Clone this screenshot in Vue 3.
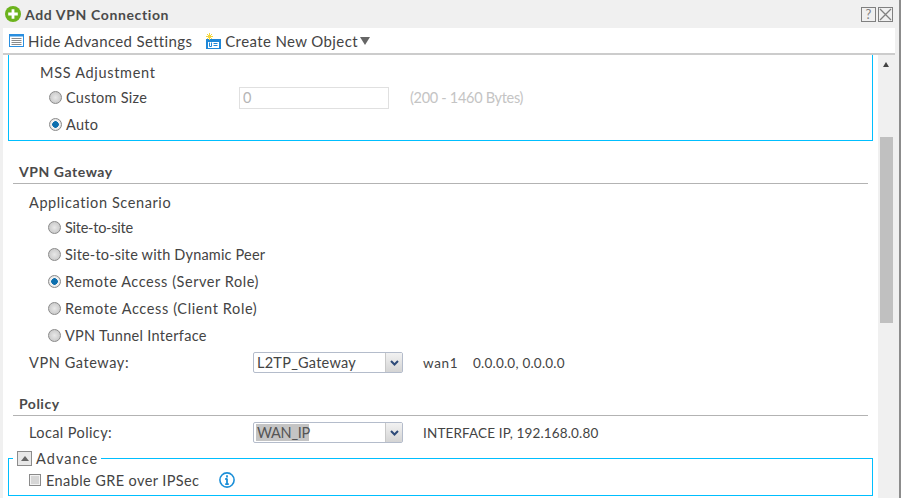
<script setup>
const scenarios = [
  { label: 'Site-to-site', on: false, track: -0.25 },
  { label: 'Site-to-site with Dynamic Peer', on: false, track: 0.18 },
  { label: 'Remote Access (Server Role)', on: true, track: 0.55 },
  { label: 'Remote Access (Client Role)', on: false, track: 0.62 },
  { label: 'VPN Tunnel Interface', on: false, track: 0.3 },
]
</script>

<template>
  <div class="window">
    <div class="dialog">
      <header class="title">
        <svg class="plus" width="16" height="16" viewBox="0 0 16 16">
          <circle cx="8" cy="8" r="8" fill="#6cb31c" />
          <path d="M8 3.2v9.6M3.2 8h9.6" stroke="#fff" stroke-width="2.8" />
        </svg>
        <span class="title-text">Add VPN Connection</span>
        <span class="win-btn">?</span>
        <span class="win-btn close">
          <svg width="13" height="13" viewBox="0 0 13 13"><path d="M1 1l11 11M12 1L1 12" stroke="#808080" stroke-width="1.3" fill="none" /></svg>
        </span>
      </header>
      <nav class="toolbar">
        <span class="tool first">
          <svg width="15" height="13" viewBox="0 0 15 13">
            <rect x=".5" y=".5" width="14" height="12" fill="#fff" stroke="#2a8fe0" />
            <rect x="0" y="0" width="15" height="2.5" fill="#2a8fe0" />
            <path d="M2.5 4.5h10M2.5 6.5h10M2.5 8.5h10M2.5 10.5h10" stroke="#8a8a8a" />
          </svg>
          Hide Advanced Settings
        </span>
        <span class="tool second">
          <svg width="15" height="16" viewBox="0 0 15 16">
            <rect x="0" y="6" width="15" height="10" fill="#1f88d8" />
            <rect x="2" y="9" width="11" height="6" fill="#fff" />
            <path d="M3.5 9.5v4h2v-4M7.5 10.5h4M7.5 12.5h4" stroke="#1f88d8" fill="none" />
            <path d="M3.5 0v7M0 3.5h7M1 1l5 5M6 1L1 6" stroke="#f5d63d" />
          </svg>
          Create New Object<span class="caret"></span>
        </span>
      </nav>
      <div class="body">
        <main class="content">
          <section class="box top-box">
            <div class="sub mss">MSS Adjustment</div>
            <div class="row custom">
              <span class="radio"></span>
              <span class="radio-label size-label">Custom Size</span>
              <input class="text-input" value="0" disabled />
              <span class="hint">(200 - 1460 Bytes)</span>
            </div>
            <div class="row auto">
              <span class="radio on"></span>
              <span class="radio-label">Auto</span>
            </div>
          </section>

          <h2 class="heading gateway-heading">VPN Gateway</h2>
          <div class="sub scenario">Application Scenario</div>
          <div v-for="s in scenarios" :key="s.label" class="row option">
            <span class="radio" :class="{ on: s.on }"></span>
            <span class="radio-label" :style="{ letterSpacing: s.track + 'px' }">{{ s.label }}</span>
          </div>
          <div class="field">
            <span class="field-label gateway-label">VPN Gateway:</span>
            <span class="select"><span class="select-value">L2TP_Gateway</span><span class="select-btn"><svg width="9" height="6" viewBox="0 0 9 6"><path d="M1 1l3.5 3.5L8 1" stroke="#2d4a78" stroke-width="2" fill="none" /></svg></span></span>
            <span class="field-note wide"><span class="iface">wan1</span>0.0.0.0, 0.0.0.0</span>
          </div>

          <h2 class="heading policy-heading">Policy</h2>
          <div class="field policy-field">
            <span class="field-label">Local Policy:</span>
            <span class="select"><span class="select-value chosen">WAN_IP</span><span class="select-btn"><svg width="9" height="6" viewBox="0 0 9 6"><path d="M1 1l3.5 3.5L8 1" stroke="#2d4a78" stroke-width="2" fill="none" /></svg></span></span>
            <span class="field-note">INTERFACE IP, 192.168.0.80</span>
          </div>

          <section class="box advance">
            <div class="legend">
              <span class="collapse"><i></i></span>
              <span class="legend-text">Advance</span>
            </div>
            <div class="row gre">
              <span class="check"></span>
              <span class="radio-label gre-label">Enable GRE over IPSec</span>
              <svg class="info" width="16" height="16" viewBox="0 0 16 16">
                <circle cx="8" cy="8" r="7.1" fill="#fff" stroke="#1b8fd8" stroke-width="1.6" />
                <path d="M8 3.2v2.2M8 6.6v5.6M6.2 7h1.8M6.2 12.2h3.6" stroke="#1b8fd8" stroke-width="1.8" fill="none" />
              </svg>
            </div>
          </section>
        </main>
        <aside class="scrollbar">
          <span class="arrow"></span>
          <span class="thumb"></span>
        </aside>
      </div>
    </div>
    <div class="edge"></div>
  </div>
</template>

<style>
html, body { margin: 0; background: #fff; }
</style>

<style scoped>
.window {
  width: 901px; height: 498px; display: flex; overflow: hidden;
  font-family: Lato, "Open Sans", sans-serif; font-size: 14.5px; color: #444;
  background: #f0f0f0;
}
.dialog { width: 899px; display: flex; flex-direction: column; }
.edge { width: 2px; background: #8c8c8c; }
.title { height: 28px; flex: none; display: flex; align-items: center; padding: 0 6px 0 5px; box-sizing: border-box; }
.plus { margin-right: 4px; }
.title-text { font-weight: 700; font-size: 14px; color: #4a4a4a; letter-spacing: .63px; flex: 1; }
.win-btn {
  width: 13px; height: 13px; border: 1px solid #808080; margin-left: 2px; font-size: 13px; line-height: 13px;
  text-align: center; color: #808080; display: flex; align-items: center; justify-content: center;
}
.toolbar {
  height: 27px; flex: none; box-sizing: border-box; margin: 0 4px 0 3px; padding-left: 6px; background: #fff;
  border-bottom: 2px solid #ccc; display: flex; align-items: center; font-size: 15px;
}
.tool { display: flex; align-items: center; gap: 4px; }
.first { letter-spacing: .35px; }
.second { margin-left: 14px; letter-spacing: .38px; }
.caret { width: 0; height: 0; border: 5px solid transparent; border-top: 8px solid #666; border-bottom: 0; margin-left: -2px; }
.body { flex: 1; display: flex; min-height: 0; margin-left: 3px; }
.content { width: 875px; background: #fff; position: relative; overflow: hidden; }
.scrollbar { flex: 1; display: flex; flex-direction: column; align-items: flex-start; padding-left: 2px; background: #f0f0f0; }
.arrow { width: 0; height: 0; margin: 7px 0 0 3px; border: 3.5px solid transparent; border-bottom: 5px solid #444; border-top: 0; }
.thumb { width: 13px; height: 186px; background: #c0c0c0; margin-top: 70px; }
.box { border: 1px solid #00bfff; box-sizing: border-box; }
.top-box { margin: 0 0 0 5px; width: 865px; height: 86px; border-top: 0; padding-top: 7px; }
.sub { font-size: 14.5px; }
.mss { margin-left: 31px; line-height: 22px; letter-spacing: .68px; }
.row { display: flex; align-items: center; }
.custom { margin-left: 40px; height: 27px; }
.auto { margin-left: 40px; height: 27px; }
.radio {
  width: 11px; height: 11px; border-radius: 50%; border: 1px solid #8a8a8a; flex: none;
  background: radial-gradient(circle, #e8e8e8, #c0c0c0);
}
.radio.on { background: radial-gradient(circle, #0d6fae 0 3px, #f4f4f4 3.6px, #d0d0d0); }
.radio-label { margin-left: 4px; letter-spacing: .25px; }
.size-label { width: 173px; }
.text-input {
  width: 150px; height: 22px; box-sizing: border-box; border: 1px solid #e0e0e0; padding: 0 3px; color: #b5b5b5; background: #fff;
  font: inherit;
}
.hint { margin-left: 21px; color: #c4c4c4; letter-spacing: -.3px; }
.heading {
  margin: 0; margin-left: 10px; width: 855px; padding-left: 6px; box-sizing: border-box; font-size: 14px; font-weight: 700; color: #4a4a4a;
  border-bottom: 1px solid #b3b3b3;
}
.gateway-heading { margin-top: 20px; height: 23px; line-height: 22px; letter-spacing: .55px; }
.scenario { margin: 7px 0 0 26px; line-height: 23px; letter-spacing: .6px; }
.option { margin-left: 45px; height: 27px; }
.field { display: flex; align-items: center; margin-left: 26px; height: 27px; }
.field-label { width: 224px; letter-spacing: .4px; }
.gateway-label { letter-spacing: .58px; }
.select {
  width: 150px; height: 21px; box-sizing: border-box; border: 1px solid #b4bccb; border-radius: 2px; display: flex; background: #fff; color: #444;
}
.select-value { flex: 1; padding-left: 3px; line-height: 19px; letter-spacing: .25px; }
.chosen {
  flex: none; width: 53px; box-sizing: border-box; margin: 1px auto 1px 2px; padding-left: 1px; line-height: 17px;
  background: #c4c4c4; color: #555; letter-spacing: -.3px;
}
.select-btn { width: 16px; border-left: 1px solid #c8c8c8; display: flex; align-items: center; justify-content: center; background: linear-gradient(#f2f2f2, #d4d4d4); }
.field-note { margin-left: 20px; font-size: 13.5px; letter-spacing: .15px; }
.wide { letter-spacing: .22px; }
.iface { display: inline-block; width: 50px; letter-spacing: .65px; }
.policy-heading { margin-top: 18px; height: 22px; line-height: 20px; letter-spacing: .5px; }
.policy-field { margin-top: 3px; }
.advance { margin: 12px 0 0 5px; width: 865px; height: 38px; position: relative; padding-top: 10px; }
.legend { position: absolute; left: 4px; top: -11px; background: #fff; display: flex; align-items: center; gap: 4px; padding: 0 3px 0 4px; height: 20px; }
.legend-text { letter-spacing: 1.05px; }
.collapse { width: 13px; height: 13px; border: 1px solid #8c8c8c; background: #e8e8e8; display: flex; align-items: center; justify-content: center; }
.collapse i { width: 0; height: 0; border: 4px solid transparent; border-bottom: 5px solid #666; border-top: 0; }
.gre { margin-left: 20px; height: 22px; }
.check { width: 10px; height: 10px; border: 1px solid #8a8a8a; background: #d6d6d6; box-shadow: inset 0 0 0 1px #f2f2f2; flex: none; }
.gre-label { margin-left: 5px; letter-spacing: .4px; }
.info { margin-left: 20px; }
</style>
